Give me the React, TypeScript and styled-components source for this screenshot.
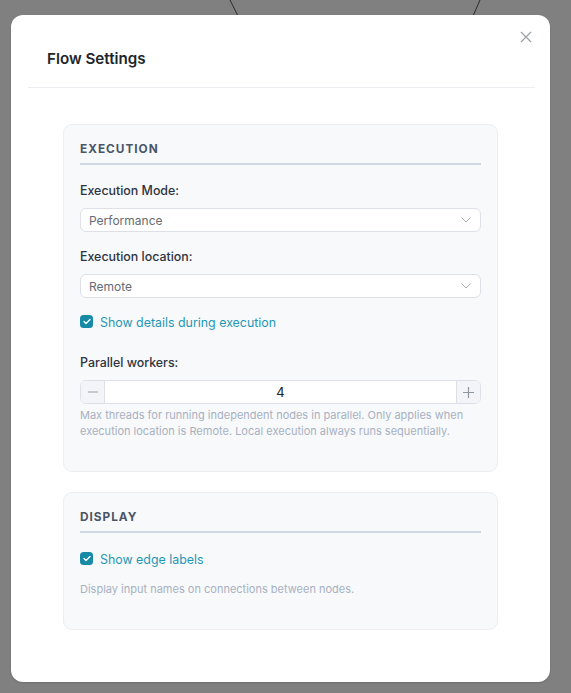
import React, { useState } from 'react';
import styled, { createGlobalStyle } from 'styled-components';

const GlobalStyle = createGlobalStyle`
  html, body {
    margin: 0;
    padding: 0;
    background: #808080;
    font-family: Inter, "Noto Sans", "Liberation Sans", sans-serif;
    -webkit-font-smoothing: antialiased;
  }
  * { box-sizing: border-box; }
`;

const Backdrop = styled.div`
  position: relative;
  width: 571px;
  height: 693px;
  overflow: hidden;
  background: #808080;
`;

const Edges = styled.svg`
  position: absolute;
  left: 0;
  top: 0;
`;

const Modal = styled.div`
  position: relative;
  margin: 15px 0 0 11px;
  width: 539px;
  height: 667px;
  background: #fff;
  border-radius: 12px;
  box-shadow: 0 1px 2px rgba(0, 0, 0, 0.15);
`;

const Header = styled.header`
  margin: 0 15px 0 17px;
  padding: 33px 19px 17px;
  border-bottom: 1px solid #eceef2;
`;

const Title = styled.h2`
  margin: 0;
  font-size: 15.2px;
  line-height: 22px;
  font-weight: 600;
  color: #212529;
`;

const CloseButton = styled.button`
  position: absolute;
  top: 11px;
  right: 13px;
  width: 22px;
  height: 22px;
  padding: 0;
  border: none;
  background: transparent;
  display: flex;
  align-items: center;
  justify-content: center;
  cursor: pointer;
`;

const Body = styled.div`
  padding: 36px 52px 52px;
  display: flex;
  flex-direction: column;
  gap: 20px;
`;

const Card = styled.section`
  background: #f8f9fa;
  border: 1px solid #eceef2;
  border-radius: 9px;
  padding: 16px 16px 32px;
`;

const CardTitle = styled.h3`
  margin: 0 0 16px;
  padding-bottom: 6px;
  border-bottom: 2px solid #cfd7e2;
  font-size: 11.8px;
  line-height: 16px;
  font-weight: 700;
  letter-spacing: 1px;
  color: #4a5568;
`;

const Field = styled.div<{ $gap?: number }>`
  margin-bottom: ${({ $gap }) => $gap ?? 15}px;
`;

const Label = styled.label`
  display: block;
  margin-bottom: 7px;
  font-size: 12.4px;
  line-height: 20px;
  font-weight: 500;
  color: #2d3440;
`;

const SelectBox = styled.div`
  position: relative;
  height: 24px;
  display: flex;
  align-items: center;
  padding: 0 8px;
  background: #fff;
  border: 1px solid #dde1e7;
  border-radius: 6px;
  font-size: 12px;
  color: #666b72;
`;

const Chevron = styled.svg`
  position: absolute;
  right: 9px;
  top: 8px;
`;

const CheckRow = styled.label<{ $gap?: number }>`
  display: flex;
  align-items: center;
  gap: 7px;
  height: 20px;
  margin-bottom: ${({ $gap }) => $gap ?? 0}px;
  font-size: 12.4px;
  color: #1f97b5;
  cursor: pointer;
`;

const Box = styled.span`
  width: 13px;
  height: 13px;
  border-radius: 3.5px;
  background: #178aa6;
  display: flex;
  align-items: center;
  justify-content: center;
  margin-top: -1px;
`;

const Stepper = styled.div`
  display: flex;
  height: 24px;
  background: #fff;
  border: 1px solid #dde1e7;
  border-radius: 6px;
  overflow: hidden;
`;

const StepButton = styled.button`
  width: 24px;
  flex: none;
  padding: 0;
  border: none;
  background: #f3f4f7;
  display: flex;
  align-items: center;
  justify-content: center;
  &:first-child { border-right: 1px solid #dde1e7; }
  &:last-child { border-left: 1px solid #dde1e7; }
`;

const StepValue = styled.div`
  flex: 1;
  display: flex;
  align-items: center;
  justify-content: center;
  font-size: 13px;
  color: #222;
`;

const Help = styled.p<{ $top?: number }>`
  margin: ${({ $top }) => $top ?? 3}px 0 0;
  font-size: 11px;
  line-height: 16px;
  color: #a7b1c2;
`;

const Check = () => (
  <Box>
    <svg width="8" height="7" viewBox="0 0 8 7">
      <path d="M1 3.6 L3 5.4 L7 1.4" fill="none" stroke="#fff" strokeWidth="1.4" strokeLinecap="round" strokeLinejoin="round" />
    </svg>
  </Box>
);

const Select = ({ value }: { value: string }) => (
  <SelectBox>
    {value}
    <Chevron width="10" height="6" viewBox="0 0 10 6">
      <path d="M0.5 0.5 L5 5 L9.5 0.5" fill="none" stroke="#a9adb3" strokeWidth="1" />
    </Chevron>
  </SelectBox>
);

export default function App() {
  const [workers, setWorkers] = useState(4);

  return (
    <Backdrop>
      <GlobalStyle />
      <Edges width="571" height="20">
        <line x1="230" y1="0" x2="238" y2="16" stroke="#2b2b2b" strokeWidth="1" />
        <line x1="480" y1="0" x2="473" y2="16" stroke="#2b2b2b" strokeWidth="1" />
      </Edges>
      <Modal>
        <CloseButton aria-label="Close">
          <svg width="12" height="12" viewBox="0 0 12 12">
            <path d="M1 1 L11 11 M11 1 L1 11" stroke="#9aa0a8" strokeWidth="1.2" />
          </svg>
        </CloseButton>
        <Header>
          <Title>Flow Settings</Title>
        </Header>
        <Body>
          <Card>
            <CardTitle>EXECUTION</CardTitle>
            <Field>
              <Label>Execution Mode:</Label>
              <Select value="Performance" />
            </Field>
            <Field $gap={14}>
              <Label>Execution location:</Label>
              <Select value="Remote" />
            </Field>
            <CheckRow $gap={21}>
              <Check />
              Show details during execution
            </CheckRow>
            <Label>Parallel workers:</Label>
            <Stepper>
              <StepButton onClick={() => setWorkers(Math.max(1, workers - 1))}>
                <svg width="10" height="2" viewBox="0 0 10 2">
                  <path d="M0 1 H10" stroke="#9aa0a8" strokeWidth="1.2" />
                </svg>
              </StepButton>
              <StepValue>{workers}</StepValue>
              <StepButton onClick={() => setWorkers(workers + 1)}>
                <svg width="11" height="11" viewBox="0 0 11 11">
                  <path d="M0 5.5 H11 M5.5 0 V11" stroke="#8f959d" strokeWidth="1.2" />
                </svg>
              </StepButton>
            </Stepper>
            <Help>
              Max threads for running independent nodes in parallel. Only applies when execution location is Remote. Local execution always runs sequentially.
            </Help>
          </Card>
          <Card>
            <CardTitle>DISPLAY</CardTitle>
            <CheckRow>
              <Check />
              Show edge labels
            </CheckRow>
            <Help $top={12}>Display input names on connections between nodes.</Help>
          </Card>
        </Body>
      </Modal>
    </Backdrop>
  );
}
